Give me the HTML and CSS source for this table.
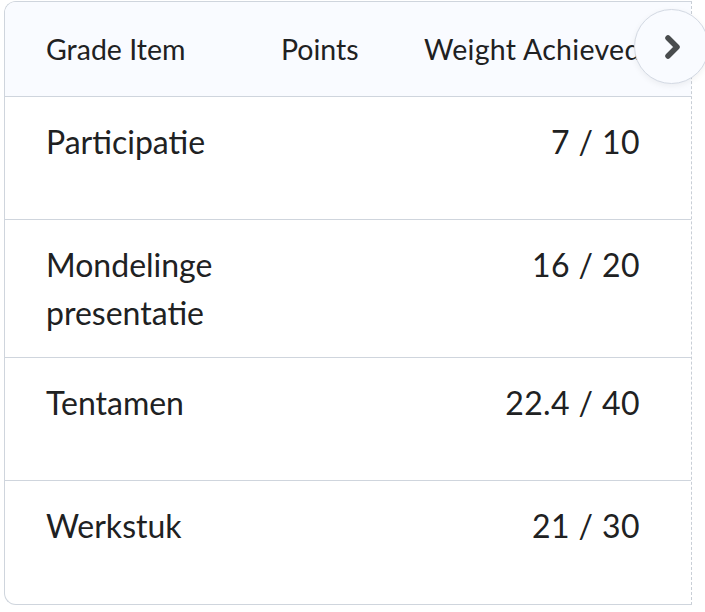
FILE: index.html
```html
<!DOCTYPE html>
<html lang="nl">
<head>
<meta charset="utf-8">
<title>Grades</title>
<link rel="stylesheet" href="styles.css">
</head>
<body>
<div class="page">
  <div class="frame">
    <table class="grades">
      <colgroup>
        <col class="c-item">
        <col class="c-points">
        <col class="c-weight">
      </colgroup>
      <thead>
        <tr>
          <th class="item">Grade Item</th>
          <th class="points">Points</th>
          <th class="weight">Weight Achieved</th>
        </tr>
      </thead>
      <tbody>
        <tr>
          <td class="item">Participatie</td>
          <td class="points"></td>
          <td class="weight">7 / 10</td>
        </tr>
        <tr>
          <td class="item">Mondelinge<br>presentatie</td>
          <td class="points"></td>
          <td class="weight">16 / 20</td>
        </tr>
        <tr>
          <td class="item">Tentamen</td>
          <td class="points"></td>
          <td class="weight">22.4 / 40</td>
        </tr>
        <tr class="last">
          <td class="item">Werkstuk</td>
          <td class="points"></td>
          <td class="weight">21 / 30</td>
        </tr>
      </tbody>
    </table>
  </div>
  <button class="scroll-btn" type="button" aria-label="Scroll right">
    <svg width="22" height="28" viewBox="0 0 22 28" aria-hidden="true">
      <path d="M7 5 L16 14 L7 23" fill="none" stroke="#494c4e" stroke-width="5.5" stroke-linecap="round" stroke-linejoin="round"/>
    </svg>
  </button>
</div>
</body>
</html>
```

FILE: styles.css
```css
* { box-sizing: border-box; }

html, body {
  margin: 0;
  padding: 0;
  background: #ffffff;
}

body {
  font-family: Lato, "Open Sans", "Liberation Sans", sans-serif;
  color: #202122;
}

.page {
  position: relative;
  padding: 1px 0 0 4px;
  width: 705px;
  height: 612px;
  overflow: hidden;
}

.frame {
  width: 688px;
  border-top: 1px solid #cfd5dd;
  border-bottom: 1px solid #cfd5dd;
  border-left: 1px solid #cfd5dd;
  border-right: 1px dashed #c8ced6;
  border-radius: 12px 0 0 12px;
  overflow: hidden;
}

.grades {
  width: 100%;
  border-collapse: separate;
  border-spacing: 0;
  table-layout: fixed;
}

.c-item { width: 245px; }
.c-points { width: 145px; }
.c-weight { width: auto; }

.grades th {
  background: #f9fbff;
  height: 95px;
  font-size: 28.5px;
  font-weight: 400;
  text-align: left;
  white-space: nowrap;
  border-bottom: 1px solid #cfd5dd;
  vertical-align: middle;
  padding: 0;
}

.grades th.item { padding-left: 41px; }
.grades th.points { padding-left: 31px; }
.grades th.weight { padding-left: 29px; overflow: hidden; letter-spacing: 0.3px; }

.grades td {
  font-size: 32px;
  line-height: 48px;
  vertical-align: top;
  height: 123px;
  padding: 21px 0 20px 0;
  border-bottom: 1px solid #cfd5dd;
}

.grades tr.last td { border-bottom: none; }

.grades td.item { padding-left: 41px; }
.grades td.weight {
  text-align: right;
  padding-right: 51px;
  letter-spacing: 0.4px;
}

.scroll-btn {
  position: absolute;
  left: 634px;
  top: 9px;
  width: 75px;
  height: 75px;
  border-radius: 50%;
  background: #f9fbff;
  border: 1px solid #d3d9e3;
  box-shadow: 0 2px 6px rgba(0, 0, 0, 0.06);
  display: flex;
  align-items: center;
  justify-content: center;
  padding: 0;
  cursor: pointer;
}
```
